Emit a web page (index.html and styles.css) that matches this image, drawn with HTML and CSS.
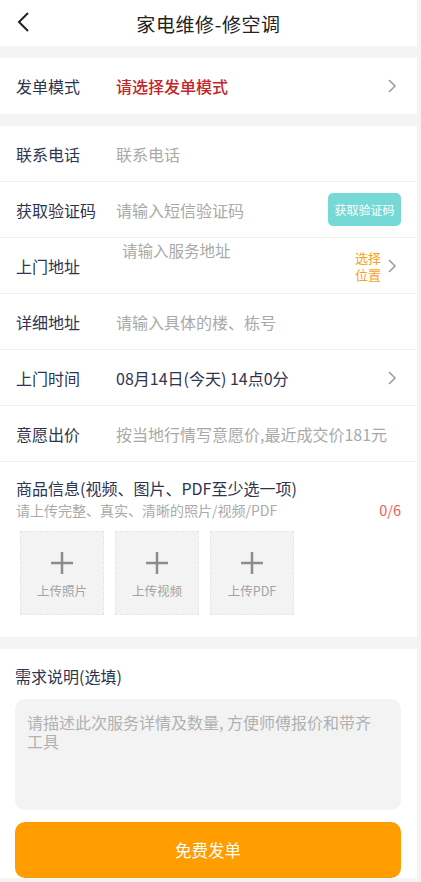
FILE: index.html
```
<!DOCTYPE html>
<html lang="zh">
<head>
<meta charset="utf-8">
<link rel="stylesheet" href="styles.css">
</head>
<body>
<div class="page">
  <header class="nav">
    <svg class="back" width="14" height="22" viewBox="0 0 14 22"><path d="M12 2 L3 11 L12 20" fill="none" stroke="#222" stroke-width="2"/></svg>
    <h1 class="title">家电维修-修空调</h1>
  </header>
  <div class="gap"></div>
  <section class="card">
    <div class="row">
      <span class="label">发单模式</span>
      <span class="value red">请选择发单模式</span>
      <svg class="chev" width="10" height="16" viewBox="0 0 10 16"><path d="M2 2 L8 8 L2 14" fill="none" stroke="#9a9a9a" stroke-width="1.5"/></svg>
    </div>
  </section>
  <div class="gap"></div>
  <section class="card">
    <div class="row line">
      <span class="label">联系电话</span>
      <span class="value ph">联系电话</span>
    </div>
    <div class="row line">
      <span class="label">获取验证码</span>
      <span class="value ph">请输入短信验证码</span>
      <span class="code-btn">获取验证码</span>
    </div>
    <div class="row line addr">
      <span class="label">上门地址</span>
      <span class="addr-ph">请输入服务地址</span>
      <span class="pick"><span class="pick-line">选择</span><span class="pick-line">位置</span></span>
      <svg class="chev" width="10" height="16" viewBox="0 0 10 16"><path d="M2 2 L8 8 L2 14" fill="none" stroke="#9a9a9a" stroke-width="1.5"/></svg>
    </div>
    <div class="row line">
      <span class="label">详细地址</span>
      <span class="value ph">请输入具体的楼、栋号</span>
    </div>
    <div class="row line">
      <span class="label">上门时间</span>
      <span class="value dark">08月14日(今天) 14点0分</span>
      <svg class="chev" width="10" height="16" viewBox="0 0 10 16"><path d="M2 2 L8 8 L2 14" fill="none" stroke="#9a9a9a" stroke-width="1.5"/></svg>
    </div>
    <div class="row line">
      <span class="label">意愿出价</span>
      <span class="value ph">按当地行情写意愿价,最近成交价181元</span>
    </div>
    <div class="goods">
      <div class="goods-title">商品信息(视频、图片、PDF至少选一项)</div>
      <div class="goods-sub">
        <span>请上传完整、真实、清晰的照片/视频/PDF</span>
        <span class="count">0/6</span>
      </div>
      <div class="uploads">
        <div class="up">
          <svg width="24" height="24" viewBox="0 0 24 24"><path d="M12 1 V23 M1 12 H23" stroke="#8c8c8c" stroke-width="2.5"/></svg>
          <span>上传照片</span>
        </div>
        <div class="up">
          <svg width="24" height="24" viewBox="0 0 24 24"><path d="M12 1 V23 M1 12 H23" stroke="#8c8c8c" stroke-width="2.5"/></svg>
          <span>上传视频</span>
        </div>
        <div class="up">
          <svg width="24" height="24" viewBox="0 0 24 24"><path d="M12 1 V23 M1 12 H23" stroke="#8c8c8c" stroke-width="2.5"/></svg>
          <span>上传PDF</span>
        </div>
      </div>
    </div>
  </section>
  <div class="gap"></div>
  <section class="card desc">
    <div class="desc-title">需求说明(选填)</div>
    <div class="textarea">请描述此次服务详情及数量, 方便师傅报价和带齐工具</div>
    <button class="submit">免费发单</button>
  </section>
</div>
</body>
</html>
```
FILE: styles.css
```
* { box-sizing: border-box; margin: 0; padding: 0; }
html, body { background: #f3f3f3; }
body {
  font-family: "Noto Sans CJK SC", "Noto Sans", sans-serif;
  width: 421px;
  height: 882px;
  overflow: hidden;
}
.page {
  width: 417px;
  background: #f4f4f4;
  min-height: 882px;
}
.nav {
  height: 46px;
  background: #fff;
  position: relative;
  display: flex;
  align-items: center;
  justify-content: center;
}
.back { position: absolute; left: 16px; top: 11px; }
.title {
  font-size: 19px;
  font-weight: 400;
  color: #222;
  letter-spacing: 0.6px;
}
.gap { height: 12px; }
.card { background: #fff; }
.row {
  height: 56px;
  display: flex;
  align-items: center;
  padding: 0 16px;
  font-size: 16px;
}
.line { border-bottom: 1px solid #f1f1f1; }
.label { width: 100px; color: #2e3450; flex-shrink: 0; }
.value { flex: 1; }
.red { color: #c3252a; font-weight: 500; }
.ph { color: #a9a9a9; }
.dark { color: #2e3450; }
.chev { margin-right: 4px; flex-shrink: 0; }
.code-btn {
  background: #76d9d6;
  color: #fff;
  font-size: 12px;
  width: 73px;
  height: 33px;
  border-radius: 5px;
  display: flex;
  align-items: center;
  justify-content: center;
}
.addr { position: relative; }
.addr-ph {
  position: absolute;
  left: 122px;
  top: 1px;
  color: #a9a9a9;
  font-size: 15.5px;
}
.addr .label { flex: 1; }
.pick {
  display: flex;
  flex-direction: column;
  color: #f7a11a;
  font-size: 13px;
  margin-right: 6px;
  margin-top: 1px;
}
.pick-line { line-height: 17px; height: 17px; }
.goods { padding: 14px 16px 22px; }
.goods-title { color: #2e3450; font-size: 16px; line-height: 24px; }
.goods-sub {
  display: flex;
  justify-content: space-between;
  color: #aaa;
  font-size: 14px;
  line-height: 20px;
}
.count { color: #f25c5c; font-size: 14.5px; }
.uploads { display: flex; gap: 11px; margin-top: 11px; padding-left: 4px; }
.up {
  width: 84px;
  height: 84px;
  background: #f3f3f3;
  border: 1px dashed #e6e6e6;
  display: flex;
  flex-direction: column;
  align-items: center;
  justify-content: center;
  gap: 6px;
  color: #a3a3a3;
  font-size: 12.5px;
}
.up svg { margin-top: 4px; }
.desc { padding: 14px 16px 3px 15px; height: 229px; }
.desc-title { color: #2e3450; font-size: 16px; line-height: 26px; }
.textarea {
  margin-top: 10px;
  height: 111px;
  background: #f3f3f3;
  border-radius: 10px;
  padding: 14px 24px 14px 12px;
  color: #b1b1b1;
  font-size: 16px;
  line-height: 19px;
}
.submit {
  margin-top: 12px;
  width: 386px;
  height: 56px;
  border: none;
  border-radius: 10px;
  background: #ff9c00;
  color: #fff;
  font-family: inherit;
  font-size: 16.5px;
  display: block;
}
```
